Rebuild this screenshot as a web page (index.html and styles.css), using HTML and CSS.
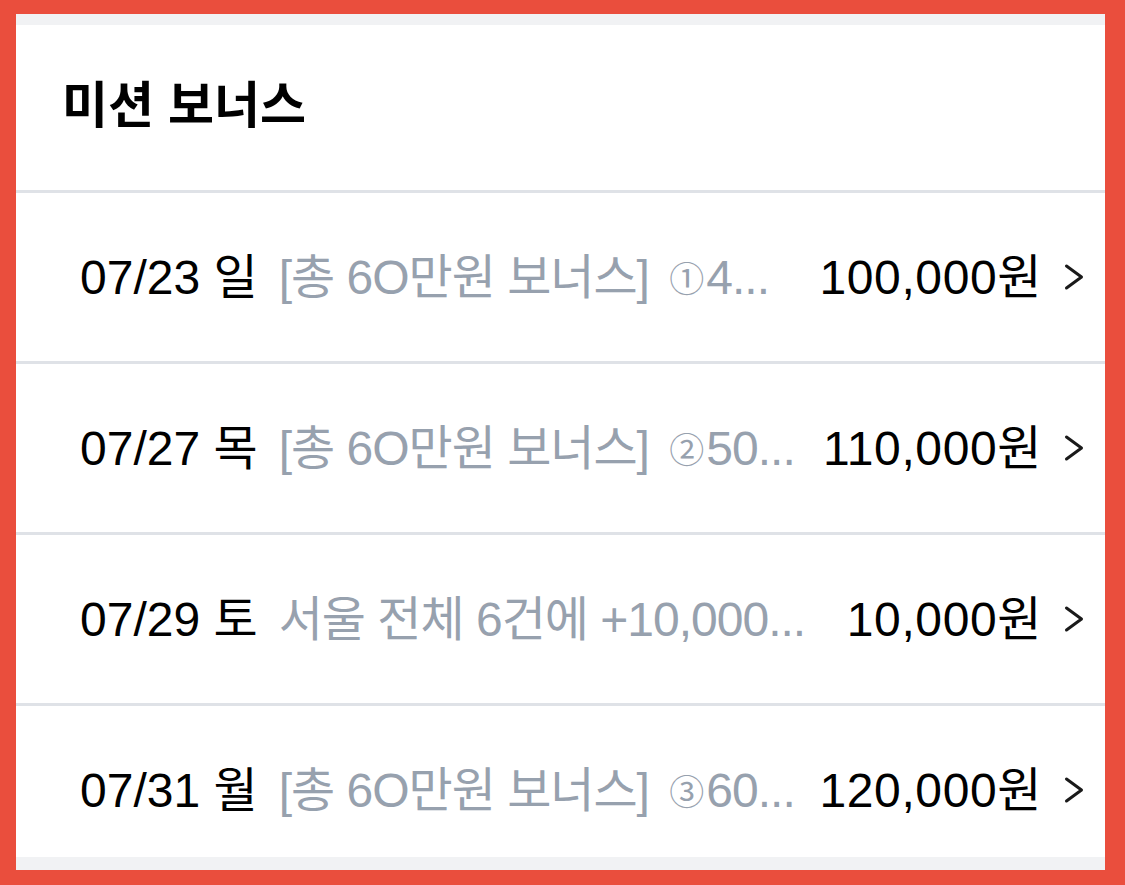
FILE: index.html
```html
<!DOCTYPE html>
<html lang="ko">
<head>
    <meta charset="UTF-8">
    <meta name="viewport" content="width=device-width, initial-scale=1.0">
    <title>미션 보너스</title>
    <link rel="stylesheet" href="styles.css">
</head>
<body>
    <div class="frame">
        <div class="screen">
            <div class="card">
                <h2 class="card-title">미션 보너스</h2>
                <ul class="mission-list">
                    <li class="mission">
                        <span class="mission-date">07/23 일</span>
                        <span class="mission-desc">[총 6O만원 보너스] <span class="circled">①</span>4...</span>
                        <span class="mission-amount">100,000원</span>
                        <svg class="chevron" viewBox="0 0 20 28"><polyline points="2.5,3 17.5,14 2.5,25"/></svg>
                    </li>
                    <li class="mission">
                        <span class="mission-date">07/27 목</span>
                        <span class="mission-desc">[총 6O만원 보너스] <span class="circled">②</span>50...</span>
                        <span class="mission-amount">110,000원</span>
                        <svg class="chevron" viewBox="0 0 20 28"><polyline points="2.5,3 17.5,14 2.5,25"/></svg>
                    </li>
                    <li class="mission">
                        <span class="mission-date">07/29 토</span>
                        <span class="mission-desc">서울 전체 6건에 +10,000...</span>
                        <span class="mission-amount">10,000원</span>
                        <svg class="chevron" viewBox="0 0 20 28"><polyline points="2.5,3 17.5,14 2.5,25"/></svg>
                    </li>
                    <li class="mission">
                        <span class="mission-date">07/31 월</span>
                        <span class="mission-desc">[총 6O만원 보너스] <span class="circled">③</span>60...</span>
                        <span class="mission-amount">120,000원</span>
                        <svg class="chevron" viewBox="0 0 20 28"><polyline points="2.5,3 17.5,14 2.5,25"/></svg>
                    </li>
                </ul>
            </div>
        </div>
    </div>
</body>
</html>
```

FILE: styles.css
```css
html, body {
    margin: 0;
    height: 100%;
}
body {
    background: #ea4e3d;
    font-family: 'Liberation Sans', 'Noto Sans CJK KR', sans-serif;
    color: #111111;
}
.frame {
    height: 100%;
    box-sizing: border-box;
    padding: 14px 20px 15px 16px;
}
.screen {
    height: 100%;
    background: #f1f2f4;
    padding: 11px 0 13px;
    box-sizing: border-box;
    overflow: hidden;
}
.card {
    background: #ffffff;
    height: 100%;
    overflow: hidden;
}
.card-title {
    margin: 0;
    height: 165px;
    box-sizing: border-box;
    padding: 0 0 14px 46px;
    display: flex;
    align-items: center;
    font-family: 'Noto Sans CJK KR', sans-serif;
    font-size: 50px;
    font-weight: 700;
    color: #000000;
}
.mission-list {
    list-style: none;
    margin: 0;
    padding: 0;
}
.mission {
    display: flex;
    align-items: center;
    box-sizing: border-box;
    height: 171px;
    border-top: 3px solid #dfe2e7;
    padding: 0 21px 8px 64px;
    font-size: 48px;
    white-space: nowrap;
}
.mission-date {
    color: #000000;
    margin-right: 21px;
}
.mission-desc {
    color: #97a1ae;
    letter-spacing: -1px;
}
.circled {
    font-size: 35px;
    letter-spacing: 0;
    margin: 0 2px 0 8px;
    position: relative;
    top: -2px;
}
.mission-amount {
    color: #000000;
    margin-left: auto;
    letter-spacing: 0.6px;
}
.chevron {
    width: 20px;
    height: 28px;
    margin-left: 22px;
    margin-top: 8px;
    fill: none;
    stroke: #1a1a1a;
    stroke-width: 3;
    stroke-linecap: round;
    stroke-linejoin: round;
}
```
